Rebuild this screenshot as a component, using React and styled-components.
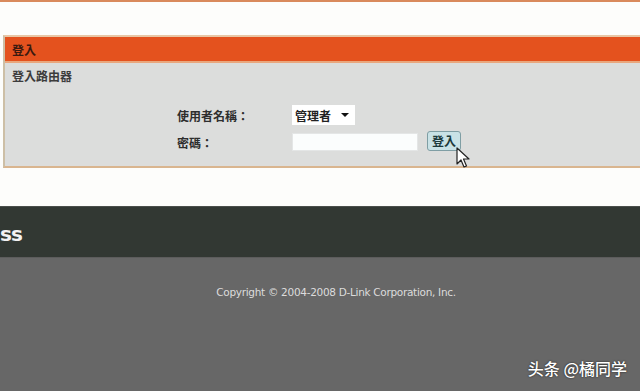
import React from "react";
import styled, { createGlobalStyle } from "styled-components";

const GlobalStyle = createGlobalStyle`
  html, body {
    margin: 0;
    padding: 0;
    background: #fdfdfb;
  }
  body {
    font-family: "Liberation Sans", "Noto Sans CJK TC", sans-serif;
  }
`;

const Page = styled.div`
  position: relative;
  width: 640px;
  height: 391px;
  overflow: hidden;
  display: flex;
  flex-direction: column;
  background: #fdfdfb;
`;

const TopLine = styled.div`
  height: 2px;
  background: #d98a5c;
  margin-bottom: 33px;
`;

const Panel = styled.section`
  margin-left: 3px;
  border-left: 2px solid #cdbfa6;
  border-top: 2px solid #e8c7a6;
  border-bottom: 2px solid #d9b58f;
`;

const PanelHeader = styled.div`
  height: 24px;
  background: #e4521e;
  border-bottom: 2px solid #e9a77d;
  display: flex;
  align-items: center;
  padding-left: 7px;
  font-size: 12px;
  font-weight: bold;
  color: #3a1a10;
  font-family: "Noto Sans CJK TC", sans-serif;
`;

const PanelBody = styled.div`
  height: 103px;
  background: #dcdddc;
  padding: 4px 0 0 7px;
  box-sizing: border-box;
`;

const Subtitle = styled.div`
  font-size: 12px;
  font-weight: bold;
  color: #3c3c3c;
  font-family: "Noto Sans CJK TC", sans-serif;
`;

const Form = styled.div`
  display: grid;
  grid-template-columns: 115px auto;
  row-gap: 8px;
  margin: 21px 0 0 165px;
  align-items: center;
`;

const Label = styled.div`
  font-size: 12px;
  font-weight: bold;
  color: #2e2e2e;
  font-family: "Noto Sans CJK TC", sans-serif;
`;

const Field = styled.div`
  display: flex;
  align-items: center;
  gap: 9px;
`;

const Select = styled.div`
  width: 63px;
  height: 20px;
  background: #ffffff;
  display: flex;
  align-items: center;
  justify-content: space-between;
  padding: 0 6px 0 3px;
  box-sizing: border-box;
  font-size: 12px;
  font-weight: bold;
  color: #222;
  font-family: "Noto Sans CJK TC", sans-serif;
`;

const Arrow = styled.span`
  width: 0;
  height: 0;
  border-left: 4px solid transparent;
  border-right: 4px solid transparent;
  border-top: 4px solid #111;
`;

const Input = styled.div`
  width: 126px;
  height: 18px;
  background: #fbfdfd;
  border: 1px solid #e4e6e6;
  box-sizing: border-box;
`;

const Button = styled.div`
  position: relative;
  width: 34px;
  height: 20px;
  margin-top: -3px;
  background: #c9e2e6;
  border: 1px solid #7f9ea4;
  border-radius: 3px;
  box-sizing: border-box;
  display: flex;
  align-items: center;
  justify-content: center;
  font-size: 12px;
  font-weight: bold;
  color: #1c3a3c;
  font-family: "Noto Sans CJK TC", sans-serif;
`;

const Cursor = styled.svg`
  position: absolute;
  left: 28px;
  top: 15px;
`;

const Gap = styled.div`
  height: 38px;
`;

const Brand = styled.div`
  height: 50px;
  background: #323833;
  border-top: 1px solid #4a4f4b;
  display: flex;
  align-items: center;
  overflow: hidden;
`;

const BrandText = styled.span`
  margin-left: 0;
  margin-top: 4px;
  font-family: "DejaVu Sans", sans-serif;
  font-weight: bold;
  font-size: 20px;
  color: #f2f2f2;
  letter-spacing: -1px;
`;

const Footer = styled.footer`
  flex: 1;
  background: #676767;
  border-top: 1px solid #5c5c5c;
  display: flex;
  justify-content: center;
  padding-top: 28px;
  padding-left: 32px;
`;

const Copyright = styled.div`
  font-family: "DejaVu Sans", sans-serif;
  font-size: 10.5px;
  color: #dcdcdc;
  letter-spacing: -0.3px;
`;

const Watermark = styled.div`
  position: absolute;
  right: 13px;
  bottom: 11px;
  font-family: "Noto Sans CJK SC", sans-serif;
  font-size: 16px;
  font-weight: 500;
  color: #ffffff;
  text-shadow: 0 0 2px rgba(0, 0, 0, 0.8);
`;

export default function App() {
  return (
    <Page>
      <GlobalStyle />
      <TopLine />
      <Panel>
        <PanelHeader>登入</PanelHeader>
        <PanelBody>
          <Subtitle>登入路由器</Subtitle>
          <Form>
            <Label>使用者名稱：</Label>
            <Field>
              <Select>
                管理者
                <Arrow />
              </Select>
            </Field>
            <Label>密碼：</Label>
            <Field>
              <Input />
              <Button>
                登入
                <Cursor width="14" height="22" viewBox="0 0 14 22">
                  <path
                    d="M1 1 L1 17 L5 13 L8 20 L10.5 19 L7.5 12 L13 12 Z"
                    fill="#ffffff"
                    stroke="#222"
                    strokeWidth="1.2"
                    strokeLinejoin="round"
                  />
                </Cursor>
              </Button>
            </Field>
          </Form>
        </PanelBody>
      </Panel>
      <Gap />
      <Brand>
        <BrandText>ss</BrandText>
      </Brand>
      <Footer>
        <Copyright>Copyright © 2004-2008 D-Link Corporation, Inc.</Copyright>
      </Footer>
      <Watermark>头条 @橘同学</Watermark>
    </Page>
  );
}
